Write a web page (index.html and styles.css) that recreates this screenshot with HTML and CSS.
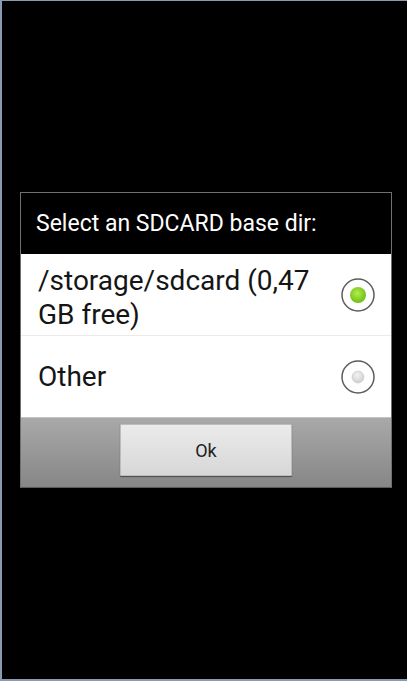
FILE: index.html
```html
<!DOCTYPE html>
<html lang="en">
<head>
  <meta charset="UTF-8" />
  <meta name="viewport" content="width=device-width, initial-scale=1.0"/>
  <title>SDCARD base dir</title>
  <link rel="stylesheet" href="styles.css">
</head>
<body>
<div class="screen">
  <div class="dialog">
    <div class="title">Select an SDCARD base dir:</div>

    <div class="option">
      <span class="label wrap">/storage/sdcard (0,47 GB free)</span>
      <svg class="radio" width="34" height="34" viewBox="0 0 34 34">
        <defs>
          <radialGradient id="green" cx="45%" cy="40%" r="60%">
            <stop offset="0" stop-color="#b4ec4e"/>
            <stop offset="1" stop-color="#6cbf12"/>
          </radialGradient>
        </defs>
        <circle cx="17" cy="17" r="16" fill="#fff" stroke="#5c5c5c" stroke-width="1.5"/>
        <circle cx="17" cy="17" r="8" fill="url(#green)"/>
      </svg>
    </div>

    <div class="option last">
      <span class="label">Other</span>
      <svg class="radio" width="34" height="34" viewBox="0 0 34 34">
        <defs>
          <radialGradient id="grey" cx="45%" cy="35%" r="65%">
            <stop offset="0" stop-color="#f2f2f2"/>
            <stop offset="1" stop-color="#cfcfcf"/>
          </radialGradient>
        </defs>
        <circle cx="17" cy="17" r="16" fill="#fff" stroke="#5c5c5c" stroke-width="1.5"/>
        <circle cx="17" cy="17" r="6" fill="url(#grey)" stroke="#c8c8c8" stroke-width="0.6"/>
      </svg>
    </div>

    <div class="buttons">
      <button class="ok">Ok</button>
    </div>
  </div>
</div>
</body>
</html>
```

FILE: styles.css
```css
html, body {
  margin: 0;
  height: 100%;
  background-color: #000;
}

body {
  font-family: Roboto, "Noto Sans", sans-serif;
}

.screen {
  box-sizing: border-box;
  height: 681px;
  border-top: 1px solid #8a9bb1;
  border-left: 2px solid #8a9bb1;
  border-bottom: 2px solid #8a9bb1;
  display: flex;
  flex-direction: column;
  justify-content: center;
  padding-left: 18px;
}

.dialog {
  width: 370px;
  border: 1px solid #707070;
  border-bottom-color: #5a5a5a;
}

.title {
  height: 61px;
  background-color: #000;
  color: #fff;
  font-size: 23px;
  display: flex;
  align-items: center;
  padding-left: 15px;
}

.option {
  background-color: #fff;
  min-height: 81px;
  display: flex;
  align-items: center;
  padding: 0 16px 0 17px;
  border-bottom: 1px solid #ebebeb;
  color: #151515;
}

.option.last {
  border-bottom: none;
}

.label {
  flex: 1;
  font-size: 28px;
  line-height: 34px;
  padding-right: 20px;
}

.label.wrap {
  padding-top: 7px;
}

.radio {
  flex: none;
  display: block;
}

.buttons {
  height: 70px;
  box-sizing: border-box;
  background: linear-gradient(#a9a9a9, #868686);
  border-top: 1px solid #c4c4c4;
  display: flex;
  justify-content: center;
  padding-top: 6px;
}

.ok {
  width: 172px;
  height: 52px;
  font-family: Roboto, "Noto Sans", sans-serif;
  font-size: 18px;
  color: #222;
  background: linear-gradient(#ebebeb, #d7d7d7);
  border: 1px solid #bcbcbc;
  border-radius: 1px;
  box-shadow: 0 1px 1px #4a4a4a;
  cursor: pointer;
}
```
